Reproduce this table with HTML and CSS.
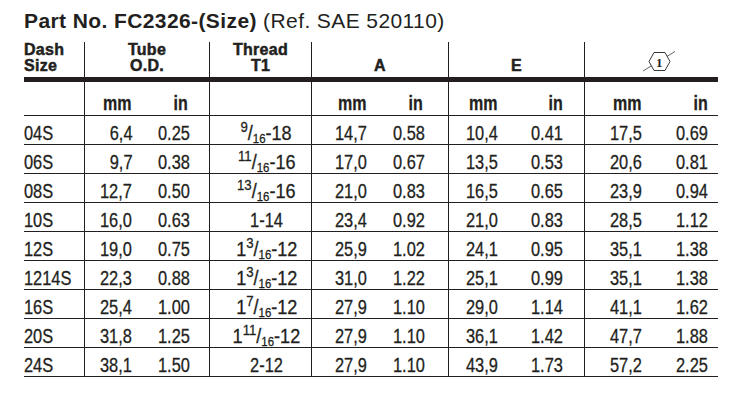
FILE: index.html
```html
<!DOCTYPE html>
<html>
<head>
<meta charset="utf-8">
<link rel="stylesheet" href="styles.css">
</head>
<body>
<div class="page">
  <h1 class="title"><b>Part No. FC2326-(Size)</b> <span class="ref">(Ref. SAE 520110)</span></h1>
  <table class="spec">
    <colgroup>
      <col class="c-dash"><col class="c-tmm"><col class="c-tin"><col class="c-thr">
      <col class="c-amm"><col class="c-ain"><col class="c-emm"><col class="c-ein">
      <col class="c-hmm"><col class="c-hin">
    </colgroup>
    <thead>
      <tr class="head">
        <th class="left">Dash<br>Size</th>
        <th colspan="2" class="grp">Tube<br>O.D.</th>
        <th class="grp">Thread<br>T1</th>
        <th colspan="2" class="grp">A</th>
        <th colspan="2" class="grp">E</th>
        <th colspan="2" class="grp hexcell">
          <svg class="hex" width="34" height="22" viewBox="0 0 34 22">
            <line x1="1" y1="21" x2="33" y2="1.5" stroke="#231f20" stroke-width="0.7"/>
            <polygon points="7,11.5 12,2.5 23,2.5 28,11.5 23,20.5 12,20.5" fill="#fff" stroke="#231f20" stroke-width="0.9"/>
            <text x="17.5" y="16.5" text-anchor="middle" class="hexnum">1</text>
          </svg>
        </th>
      </tr>
      <tr class="units">
        <th></th>
        <th class="grp mm"><span class="t">mm</span></th><th class="in tin"><span class="t">in</span></th>
        <th class="grp"></th>
        <th class="grp mm"><span class="t">mm</span></th><th class="in ain"><span class="t">in</span></th>
        <th class="grp mm"><span class="t">mm</span></th><th class="in ein"><span class="t">in</span></th>
        <th class="grp mm"><span class="t">mm</span></th><th class="in hin"><span class="t">in</span></th>
      </tr>
    </thead>
    <tbody>
      <tr><td class="dash"><span class="t">04S</span></td><td class="grp mm"><span class="t">6,4</span></td><td class="in tin"><span class="t">0.25</span></td><td class="grp thr"><span class="t fr"><span class="num">9</span>/<span class="den">16</span>-18</span></td><td class="grp mm"><span class="t">14,7</span></td><td class="in ain"><span class="t">0.58</span></td><td class="grp mm"><span class="t">10,4</span></td><td class="in ein"><span class="t">0.41</span></td><td class="grp mm"><span class="t">17,5</span></td><td class="in hin"><span class="t">0.69</span></td></tr>
      <tr><td class="dash"><span class="t">06S</span></td><td class="grp mm"><span class="t">9,7</span></td><td class="in tin"><span class="t">0.38</span></td><td class="grp thr"><span class="t fr"><span class="num">11</span>/<span class="den">16</span>-16</span></td><td class="grp mm"><span class="t">17,0</span></td><td class="in ain"><span class="t">0.67</span></td><td class="grp mm"><span class="t">13,5</span></td><td class="in ein"><span class="t">0.53</span></td><td class="grp mm"><span class="t">20,6</span></td><td class="in hin"><span class="t">0.81</span></td></tr>
      <tr><td class="dash"><span class="t">08S</span></td><td class="grp mm"><span class="t">12,7</span></td><td class="in tin"><span class="t">0.50</span></td><td class="grp thr"><span class="t fr"><span class="num">13</span>/<span class="den">16</span>-16</span></td><td class="grp mm"><span class="t">21,0</span></td><td class="in ain"><span class="t">0.83</span></td><td class="grp mm"><span class="t">16,5</span></td><td class="in ein"><span class="t">0.65</span></td><td class="grp mm"><span class="t">23,9</span></td><td class="in hin"><span class="t">0.94</span></td></tr>
      <tr><td class="dash"><span class="t">10S</span></td><td class="grp mm"><span class="t">16,0</span></td><td class="in tin"><span class="t">0.63</span></td><td class="grp thr"><span class="t">1-14</span></td><td class="grp mm"><span class="t">23,4</span></td><td class="in ain"><span class="t">0.92</span></td><td class="grp mm"><span class="t">21,0</span></td><td class="in ein"><span class="t">0.83</span></td><td class="grp mm"><span class="t">28,5</span></td><td class="in hin"><span class="t">1.12</span></td></tr>
      <tr><td class="dash"><span class="t">12S</span></td><td class="grp mm"><span class="t">19,0</span></td><td class="in tin"><span class="t">0.75</span></td><td class="grp thr"><span class="t fr">1<span class="num">3</span>/<span class="den">16</span>-12</span></td><td class="grp mm"><span class="t">25,9</span></td><td class="in ain"><span class="t">1.02</span></td><td class="grp mm"><span class="t">24,1</span></td><td class="in ein"><span class="t">0.95</span></td><td class="grp mm"><span class="t">35,1</span></td><td class="in hin"><span class="t">1.38</span></td></tr>
      <tr><td class="dash"><span class="t">1214S</span></td><td class="grp mm"><span class="t">22,3</span></td><td class="in tin"><span class="t">0.88</span></td><td class="grp thr"><span class="t fr">1<span class="num">3</span>/<span class="den">16</span>-12</span></td><td class="grp mm"><span class="t">31,0</span></td><td class="in ain"><span class="t">1.22</span></td><td class="grp mm"><span class="t">25,1</span></td><td class="in ein"><span class="t">0.99</span></td><td class="grp mm"><span class="t">35,1</span></td><td class="in hin"><span class="t">1.38</span></td></tr>
      <tr><td class="dash"><span class="t">16S</span></td><td class="grp mm"><span class="t">25,4</span></td><td class="in tin"><span class="t">1.00</span></td><td class="grp thr"><span class="t fr">1<span class="num">7</span>/<span class="den">16</span>-12</span></td><td class="grp mm"><span class="t">27,9</span></td><td class="in ain"><span class="t">1.10</span></td><td class="grp mm"><span class="t">29,0</span></td><td class="in ein"><span class="t">1.14</span></td><td class="grp mm"><span class="t">41,1</span></td><td class="in hin"><span class="t">1.62</span></td></tr>
      <tr><td class="dash"><span class="t">20S</span></td><td class="grp mm"><span class="t">31,8</span></td><td class="in tin"><span class="t">1.25</span></td><td class="grp thr"><span class="t fr">1<span class="num">11</span>/<span class="den">16</span>-12</span></td><td class="grp mm"><span class="t">27,9</span></td><td class="in ain"><span class="t">1.10</span></td><td class="grp mm"><span class="t">36,1</span></td><td class="in ein"><span class="t">1.42</span></td><td class="grp mm"><span class="t">47,7</span></td><td class="in hin"><span class="t">1.88</span></td></tr>
      <tr class="last"><td class="dash"><span class="t">24S</span></td><td class="grp mm"><span class="t">38,1</span></td><td class="in tin"><span class="t">1.50</span></td><td class="grp thr"><span class="t">2-12</span></td><td class="grp mm"><span class="t">27,9</span></td><td class="in ain"><span class="t">1.10</span></td><td class="grp mm"><span class="t">43,9</span></td><td class="in ein"><span class="t">1.73</span></td><td class="grp mm"><span class="t">57,2</span></td><td class="in hin"><span class="t">2.25</span></td></tr>
    </tbody>
  </table>
</div>
</body>
</html>
```

FILE: styles.css
```css
html, body {
  margin: 0;
  padding: 0;
  background: #ffffff;
  color: #231f20;
}

.page {
  padding: 8px 0 0 24px;
}

.title {
  margin: 0 0 8px 0;
  font-family: "Liberation Sans", Arial, sans-serif;
  font-size: 21px;
  line-height: 26px;
  font-weight: normal;
  letter-spacing: 0.4px;
  white-space: nowrap;
}

.title b {
  font-weight: bold;
}

.spec {
  border-collapse: separate;
  border-spacing: 0;
  table-layout: fixed;
  width: 694px;
  font-family: "Liberation Sans", Arial, sans-serif;
  font-size: 20.5px;
}

.c-dash { width: 60px; }
.c-tmm { width: 66px; }
.c-tin { width: 59px; }
.c-thr { width: 102px; }
.c-amm { width: 74px; }
.c-ain { width: 63px; }
.c-emm { width: 68px; }
.c-ein { width: 68px; }
.c-hmm { width: 76px; }
.c-hin { width: 58px; }

.spec th, .spec td {
  padding: 0;
  box-sizing: border-box;
}

.grp {
  border-left: 1px solid #231f20;
}

.t {
  display: inline-block;
  transform: scaleX(0.8);
  transform-origin: right center;
  white-space: nowrap;
}

.head th {
  height: 40px;
  border-bottom: 5px solid #231f20;
  vertical-align: bottom;
  text-align: center;
  font-family: "Liberation Sans", Arial, sans-serif;
  font-weight: bold;
  font-size: 16px;
  line-height: 16px;
  letter-spacing: 0.3px;
  -webkit-text-stroke: 0.5px #231f20;
  padding-bottom: 3px;
}

.head th.left {
  text-align: left;
}

.head th.hexcell {
  padding-left: 14px;
  padding-bottom: 5px;
  -webkit-text-stroke: 0;
}

.hex {
  display: block;
  margin: 0 auto;
}

.hexnum {
  font-family: "Liberation Serif", serif;
  font-size: 13px;
  fill: #231f20;
}

.units th {
  height: 33px;
  vertical-align: bottom;
  font-weight: bold;
  font-size: 20px;
  line-height: 20px;
  -webkit-text-stroke: 0.3px #231f20;
  padding-bottom: 2px;
}

.spec tbody td {
  height: 29px;
  border-top: 1px solid #231f20;
  vertical-align: top;
  line-height: 22px;
  padding-top: 6px;
  white-space: nowrap;
  -webkit-text-stroke: 0.3px #231f20;
}

.spec tbody tr.last td {
  height: 30px;
  border-bottom: 1px solid #231f20;
}

.dash {
  text-align: left;
}

.dash .t {
  transform-origin: left center;
}

.mm {
  text-align: right;
  padding-right: 18px !important;
}

.in {
  text-align: right;
}

.tin { padding-right: 21px !important; }
.ain { padding-right: 25px !important; }
.ein { padding-right: 21px !important; }
.hin { padding-right: 10px !important; }

.thr {
  text-align: center;
  padding-left: 12px !important;
}

.thr .t {
  transform-origin: center center;
}

.thr .fr {
  transform: scaleX(0.88);
}

.num {
  font-size: 15px;
  line-height: 0;
  vertical-align: 8px;
}

.den {
  font-size: 13px;
  line-height: 0;
  vertical-align: -3px;
}
```
